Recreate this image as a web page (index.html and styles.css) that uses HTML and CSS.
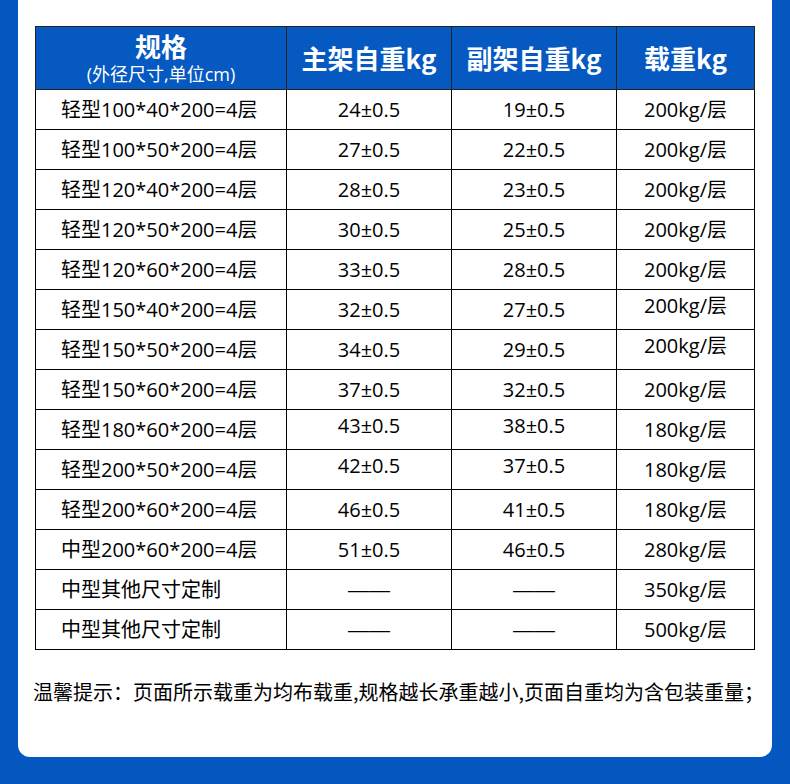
FILE: index.html
```html
<!DOCTYPE html>
<html lang="zh">
<head>
<meta charset="utf-8">
<link rel="stylesheet" href="styles.css">
</head>
<body>
<div class="card">
  <table class="spec">
    <colgroup>
      <col class="c1"><col class="c2"><col class="c3"><col class="c4">
    </colgroup>
    <thead>
      <tr>
        <th class="h1"><div class="ht">规格</div><div class="hs">(外径尺寸,单位cm)</div></th>
        <th>主架自重kg</th>
        <th>副架自重kg</th>
        <th>载重kg</th>
      </tr>
    </thead>
    <tbody>
      <tr><td class="name">轻型100*40*200=4层</td><td>24±0.5</td><td>19±0.5</td><td>200kg/层</td></tr>
      <tr><td class="name">轻型100*50*200=4层</td><td>27±0.5</td><td>22±0.5</td><td>200kg/层</td></tr>
      <tr><td class="name">轻型120*40*200=4层</td><td>28±0.5</td><td>23±0.5</td><td>200kg/层</td></tr>
      <tr><td class="name">轻型120*50*200=4层</td><td>30±0.5</td><td>25±0.5</td><td>200kg/层</td></tr>
      <tr><td class="name">轻型120*60*200=4层</td><td>33±0.5</td><td>28±0.5</td><td>200kg/层</td></tr>
      <tr><td class="name">轻型150*40*200=4层</td><td>32±0.5</td><td>27±0.5</td><td class="up">200kg/层</td></tr>
      <tr><td class="name">轻型150*50*200=4层</td><td>34±0.5</td><td>29±0.5</td><td class="up">200kg/层</td></tr>
      <tr><td class="name">轻型150*60*200=4层</td><td>37±0.5</td><td>32±0.5</td><td>200kg/层</td></tr>
      <tr><td class="name">轻型180*60*200=4层</td><td class="up">43±0.5</td><td class="up">38±0.5</td><td>180kg/层</td></tr>
      <tr><td class="name">轻型200*50*200=4层</td><td class="up">42±0.5</td><td class="up">37±0.5</td><td>180kg/层</td></tr>
      <tr><td class="name">轻型200*60*200=4层</td><td>46±0.5</td><td>41±0.5</td><td>180kg/层</td></tr>
      <tr><td class="name">中型200*60*200=4层</td><td>51±0.5</td><td>46±0.5</td><td>280kg/层</td></tr>
      <tr><td class="name">中型其他尺寸定制</td><td class="dash">——</td><td class="dash">——</td><td>350kg/层</td></tr>
      <tr><td class="name">中型其他尺寸定制</td><td class="dash">——</td><td class="dash">——</td><td>500kg/层</td></tr>
    </tbody>
  </table>
  <p class="note">温馨提示：页面所示载重为均布载重,规格越长承重越小,页面自重均为含包装重量；</p>
</div>
</body>
</html>
```

FILE: styles.css
```css
html, body {
  margin: 0;
  padding: 0;
}
body {
  background: #0558c0;
  width: 790px;
  height: 784px;
  overflow: hidden;
  font-family: "Noto Sans CJK SC", "Noto Sans", sans-serif;
  color: #000;
}
.card {
  margin-left: 18px;
  width: 754px;
  height: 757px;
  background: #fff;
  border-radius: 0 0 12px 12px;
  padding-top: 26px;
  box-sizing: border-box;
}
.spec {
  margin-left: 17px;
  width: 719px;
  border-collapse: collapse;
  table-layout: fixed;
}
.c1 { width: 251px; }
.c2 { width: 165px; }
.c3 { width: 165px; }
.c4 { width: 138px; }
.spec th {
  background: #0559c1;
  color: #fff;
  font-weight: 700;
  font-size: 26px;
  height: 62px;
  padding: 0;
  border: 1px solid #222;
  line-height: 1;
  text-align: center;
  vertical-align: middle;
}
.ht {
  font-size: 26px;
  line-height: 26px;
}
.hs {
  font-family: "Open Sans", "Noto Sans CJK SC", sans-serif;
  font-size: 18px;
  font-weight: 400;
  line-height: 20px;
  margin-top: 5px;
}
.spec td {
  border: 1px solid #000;
  height: 39px;
  padding: 0;
  font-family: "Open Sans", "Noto Sans CJK SC", sans-serif;
  font-size: 20px;
  line-height: 24px;
  color: #000;
  text-align: center;
  vertical-align: middle;
}
.spec td.name {
  text-align: left;
  padding-left: 25px;
}
.spec td.dash {
  font-family: "Liberation Sans", sans-serif;
  font-size: 21px;
}
.spec td.up {
  padding-bottom: 7px;
  box-sizing: border-box;
}
.note {
  margin: 27px 0 0 15px;
  font-size: 20px;
  line-height: 30px;
  color: #000;
  white-space: nowrap;
}
```
